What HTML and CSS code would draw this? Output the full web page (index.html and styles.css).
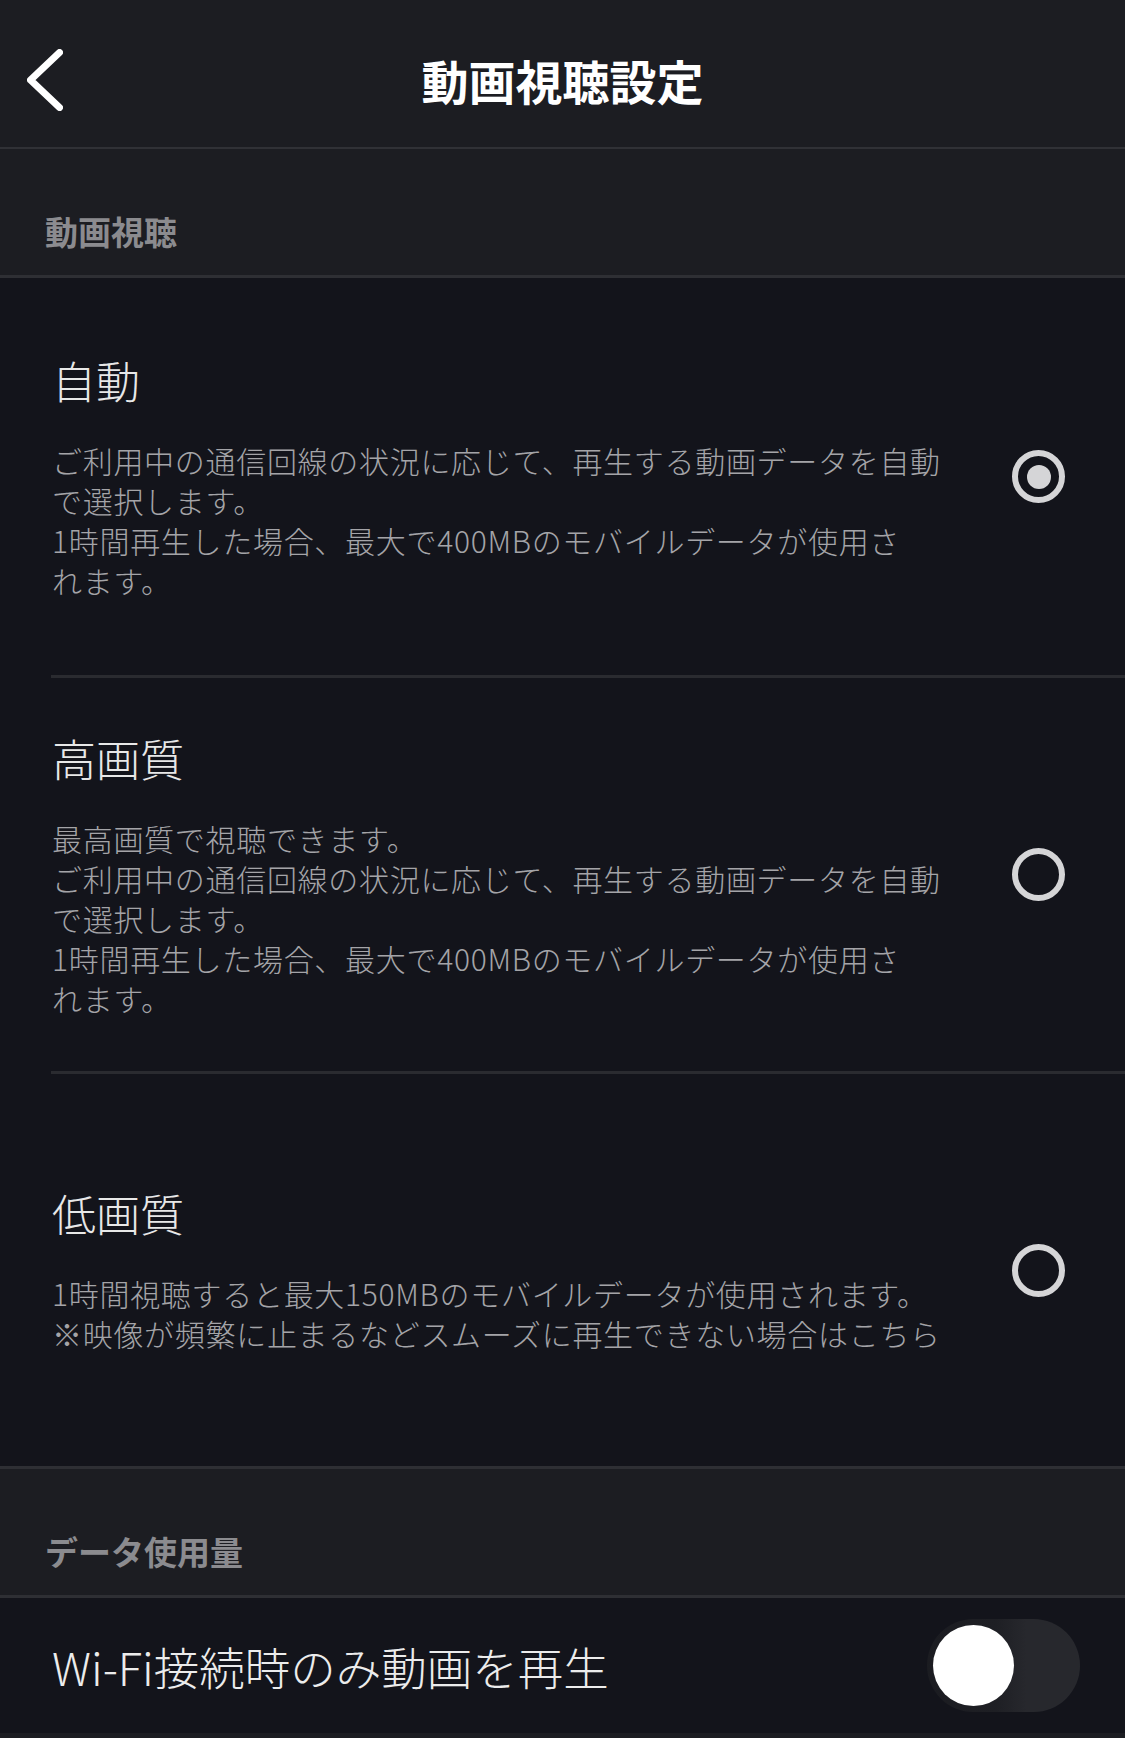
FILE: index.html
```html
<!DOCTYPE html>
<html lang="ja">
<head>
<meta charset="utf-8">
<title>動画視聴設定</title>
<link rel="stylesheet" href="styles.css">
</head>
<body>
<div class="page">
  <header class="topbar">
    <div class="back">
      <svg width="36" height="62" viewBox="0 0 36 62" aria-hidden="true">
        <path d="M32.5 3.5 L3.5 31 L32.5 58.5" fill="none" stroke="#ffffff" stroke-width="7" stroke-linecap="round" stroke-linejoin="round"/>
      </svg>
    </div>
    <h1 class="title">動画視聴設定</h1>
    <div class="spacer"></div>
  </header>

  <div class="section-head">動画視聴</div>

  <div class="options">
    <div class="option option-first">
      <div class="option-text">
        <div class="option-title">自動</div>
        <p class="option-desc">ご利用中の通信回線の状況に応じて、再生する動画データを自動<br>で選択します。<br>1時間再生した場合、最大で400MBのモバイルデータが使用さ<br>れます。</p>
      </div>
      <span class="radio radio-on"></span>
    </div>
    <div class="option">
      <div class="option-text">
        <div class="option-title">高画質</div>
        <p class="option-desc">最高画質で視聴できます。<br>ご利用中の通信回線の状況に応じて、再生する動画データを自動<br>で選択します。<br>1時間再生した場合、最大で400MBのモバイルデータが使用さ<br>れます。</p>
      </div>
      <span class="radio"></span>
    </div>
    <div class="option option-last">
      <div class="option-text">
        <div class="option-title">低画質</div>
        <p class="option-desc">1時間視聴すると最大150MBのモバイルデータが使用されます。<br>※映像が頻繁に止まるなどスムーズに再生できない場合はこちら</p>
      </div>
      <span class="radio"></span>
    </div>
  </div>

  <div class="section-head">データ使用量</div>

  <div class="toggle-row">
    <span class="toggle-label">Wi-Fi接続時のみ動画を再生</span>
    <span class="toggle"><span class="knob"></span></span>
  </div>

  <div class="section-foot"></div>
</div>
</body>
</html>
```

FILE: styles.css
```css
* {
  box-sizing: border-box;
}

html, body {
  margin: 0;
  padding: 0;
  background: #13141b;
}

body {
  font-family: "Noto Sans CJK JP", "Noto Sans", sans-serif;
  color: #e6e6e6;
}

.page {
  width: 1125px;
  min-height: 1738px;
  background: #13141b;
}

.topbar {
  height: 149px;
  padding-top: 13px;
  background: #1c1d22;
  border-bottom: 2px solid #303136;
  display: grid;
  grid-template-columns: 1fr auto 1fr;
  align-items: center;
}

.back {
  padding-left: 27px;
  display: flex;
  align-items: center;
}

.back svg {
  display: block;
}

.title {
  margin: 0;
  font-size: 47px;
  line-height: 60px;
  font-weight: 700;
  color: #ffffff;
}

.section-head {
  background: #1c1d22;
  padding: 62px 0 24px 45px;
  font-size: 33px;
  line-height: 40px;
  font-weight: 700;
  color: #8b8b8f;
  border-bottom: 3px solid #2e2f34;
}

.options {
  background: #13141b;
  border-bottom: 3px solid #2e2f34;
}

.option {
  height: 396px;
  margin-left: 51px;
  padding: 0 60px 0 1px;
  border-bottom: 3px solid #2a2b30;
  display: flex;
  align-items: center;
  gap: 30px;
}

.option-first {
  height: 400px;
}

.option-last {
  border-bottom: none;
  height: 392px;
}

.option-text {
  flex: 1;
  min-width: 0;
}

.option-title {
  font-size: 44px;
  line-height: 52px;
  font-weight: 300;
  color: #e8e8e8;
  margin-bottom: 34px;
}

.option-desc {
  margin: 0;
  font-size: 30px;
  line-height: 40px;
  letter-spacing: 0.7px;
  font-weight: 300;
  color: #a4a4a8;
  white-space: nowrap;
}

.radio {
  flex: none;
  width: 53px;
  height: 53px;
  border-radius: 50%;
  border: 6px solid #d5d5d7;
  display: flex;
  align-items: center;
  justify-content: center;
}

.radio-on::after {
  content: "";
  width: 24px;
  height: 24px;
  border-radius: 50%;
  background: #d5d5d7;
}

.toggle-row {
  height: 135px;
  padding: 0 45px 0 52px;
  display: flex;
  align-items: center;
  justify-content: space-between;
  background: #13141b;
}

.toggle-label {
  font-size: 45.5px;
  line-height: 56px;
  font-weight: 300;
  color: #ececec;
}

.toggle {
  width: 153px;
  height: 93px;
  border-radius: 47px;
  background: linear-gradient(to right, #1b1c21 0%, #1e1f24 45%, #27282d 65%, #27282d 100%);
  padding: 6px;
  display: flex;
  align-items: center;
}

.knob {
  width: 81px;
  height: 81px;
  border-radius: 50%;
  background: #ffffff;
}

.section-foot {
  height: 60px;
  background: #1c1d22;
}
```
